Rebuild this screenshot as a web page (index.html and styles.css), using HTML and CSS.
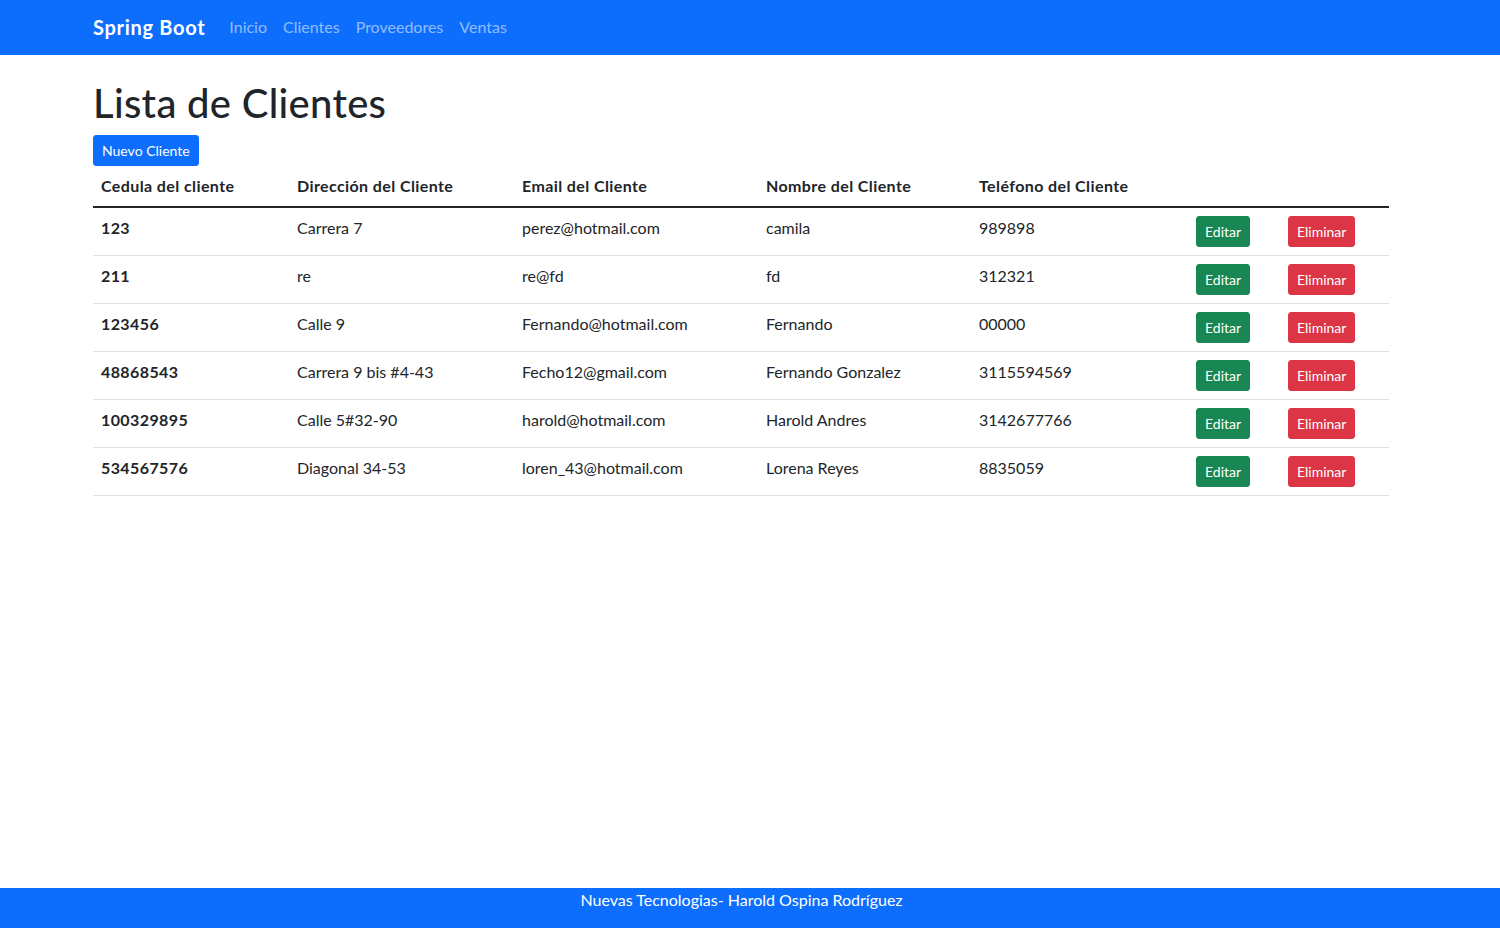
FILE: index.html
```html
<!DOCTYPE html>
<html lang="es">
<head>
<meta charset="utf-8">
<title>Lista de Clientes</title>
<link rel="stylesheet" href="styles.css">
</head>
<body>
<nav class="navbar">
  <div class="container nav-inner">
    <a class="brand" href="#">Spring Boot</a>
    <ul class="nav-links">
      <li><a href="#">Inicio</a></li>
      <li><a href="#">Clientes</a></li>
      <li><a href="#">Proveedores</a></li>
      <li><a href="#">Ventas</a></li>
    </ul>
  </div>
</nav>
<main class="container main">
  <h1>Lista de Clientes</h1>
  <a class="btn btn-primary" href="#">Nuevo Cliente</a>
  <table class="table">
    <colgroup>
      <col class="c1"><col class="c2"><col class="c3"><col class="c4"><col class="c5"><col class="c6"><col class="c7">
    </colgroup>
    <thead>
      <tr>
        <th>Cedula del cliente</th>
        <th>Dirección del Cliente</th>
        <th>Email del Cliente</th>
        <th>Nombre del Cliente</th>
        <th>Teléfono del Cliente</th>
        <th></th>
        <th></th>
      </tr>
    </thead>
    <tbody>
      <tr><th>123</th><td>Carrera 7</td><td>perez@hotmail.com</td><td>camila</td><td>989898</td><td><a class="btn btn-success" href="#">Editar</a></td><td><a class="btn btn-danger" href="#">Eliminar</a></td></tr>
      <tr><th>211</th><td>re</td><td>re@fd</td><td>fd</td><td>312321</td><td><a class="btn btn-success" href="#">Editar</a></td><td><a class="btn btn-danger" href="#">Eliminar</a></td></tr>
      <tr><th>123456</th><td>Calle 9</td><td>Fernando@hotmail.com</td><td>Fernando</td><td>00000</td><td><a class="btn btn-success" href="#">Editar</a></td><td><a class="btn btn-danger" href="#">Eliminar</a></td></tr>
      <tr><th>48868543</th><td>Carrera 9 bis #4-43</td><td>Fecho12@gmail.com</td><td>Fernando Gonzalez</td><td>3115594569</td><td><a class="btn btn-success" href="#">Editar</a></td><td><a class="btn btn-danger" href="#">Eliminar</a></td></tr>
      <tr><th>100329895</th><td>Calle 5#32-90</td><td>harold@hotmail.com</td><td>Harold Andres</td><td>3142677766</td><td><a class="btn btn-success" href="#">Editar</a></td><td><a class="btn btn-danger" href="#">Eliminar</a></td></tr>
      <tr><th>534567576</th><td>Diagonal 34-53</td><td>loren_43@hotmail.com</td><td>Lorena Reyes</td><td>8835059</td><td><a class="btn btn-success" href="#">Editar</a></td><td><a class="btn btn-danger" href="#">Eliminar</a></td></tr>
    </tbody>
  </table>
</main>
<footer class="footer">
  <div class="footer-text">Nuevas Tecnologias- Harold Ospina Rodríguez</div>
</footer>
</body>
</html>
```
FILE: styles.css
```css
* { box-sizing: border-box; }
html, body { height: 100%; }
body {
  margin: 0;
  font-family: Lato, "Liberation Sans", sans-serif;
  font-size: 16px;
  line-height: 1.5;
  color: #212529;
  background: #fff;
  display: flex;
  flex-direction: column;
}
a { text-decoration: none; }
.container {
  width: 1320px;
  margin-left: 81px;
  padding: 0 12px;
}
.navbar {
  background: #0d6efd;
  padding: 7px 0 9px;
  height: 55px;
}
.nav-inner {
  display: flex;
  align-items: center;
}
.brand {
  color: #fff;
  font-weight: 700;
  font-size: 20px;
  line-height: 30px;
  padding: 4px 0;
  margin-right: 16px;
  letter-spacing: 0.7px;
}
.nav-links {
  list-style: none;
  margin: 0;
  padding: 0;
  display: flex;
}
.nav-links a {
  display: block;
  padding: 8px;
  color: rgba(255,255,255,.55);
  line-height: 24px;
}
.main {
  flex: 1;
  padding-top: 24px;
}
h1 {
  margin: 0 0 8px;
  font-size: 40px;
  font-weight: 500;
  line-height: 1.2;
  letter-spacing: 0.3px;
}
.btn {
  display: inline-block;
  font-size: 14px;
  line-height: 21px;
  padding: 4px 8px;
  border: 1px solid transparent;
  border-radius: 3px;
  color: #fff;
  vertical-align: top;
}
.btn-primary { background: #0d6efd; border-color: #0d6efd; }
.btn-success { background: #198754; border-color: #198754; }
.btn-danger { background: #dc3545; border-color: #dc3545; }
.table {
  width: 100%;
  table-layout: fixed;
  border-collapse: collapse;
  vertical-align: top;
}
.c1 { width: 196px; }
.c2 { width: 225px; }
.c3 { width: 244px; }
.c4 { width: 213px; }
.c5 { width: 217px; }
.c6 { width: 92px; }
.c7 { width: 109px; }
.table th, .table td {
  padding: 8px;
  text-align: left;
  vertical-align: top;
  border-bottom: 1px solid #dee2e6;
}
.table th { font-weight: 700; letter-spacing: 0.4px; }
.table thead th { border-bottom: 2px solid #212529; }
.footer {
  background: #0d6efd;
  height: 40px;
  color: #fff;
}
.footer-text {
  width: 1483px;
  text-align: center;
  line-height: 24px;
}
```
